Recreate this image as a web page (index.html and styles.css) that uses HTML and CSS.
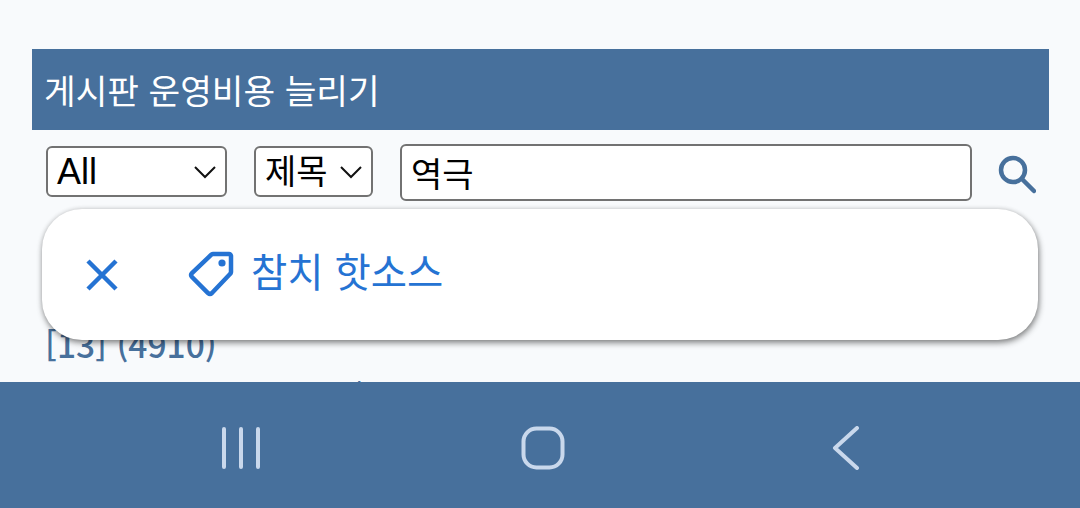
FILE: index.html
```html
<!DOCTYPE html>
<html lang="ko">
<head>
<meta charset="utf-8">
<title>게시판</title>
<link rel="stylesheet" href="styles.css">
</head>
<body>
<main class="page">
  <h1 class="board-title">게시판 운영비용 늘리기</h1>
  <form class="search-row">
    <div class="select select-all"><span>All</span><svg class="chev" width="24" height="14" viewBox="0 0 24 14"><path d="M3 2l10 10L23 2" /></svg></div>
    <div class="select select-field"><span>제목</span><svg class="chev" width="24" height="14" viewBox="0 0 24 14"><path d="M3 2l10 10L23 2" /></svg></div>
    <div class="search-input">역극</div>
    <svg class="search-icon" width="40" height="40" viewBox="0 0 40 40"><circle cx="17" cy="16" r="12" /><path d="M26.5 25.5L38 37" /></svg>
  </form>
  <div class="post-meta">[13] (4910)</div>
  <div class="post-title">역극 참치 핫소스 역극/</div>
  <div class="toast">
    <svg class="toast-close" width="36" height="36" viewBox="0 0 36 36"><path d="M4 4l28 28M32 4L4 32" /></svg>
    <svg class="toast-tag" width="46" height="46" viewBox="0 0 46 46"><path d="M25 3h16a2 2 0 0 1 2 2v16a3 3 0 0 1-1 2L24 42a3 3 0 0 1-4 0L4 26a3 3 0 0 1 0-4L23 4a3 3 0 0 1 2-1z" /><circle class="tag-hole" cx="34" cy="12" r="3.6" /></svg>
    <span class="toast-text">참치 핫소스</span>
  </div>
</main>
<nav class="navbar">
  <svg class="nav-recent" width="40" height="42" viewBox="0 0 40 42"><path d="M3 2v38M20 2v38M37 2v38" /></svg>
  <svg class="nav-home" width="44" height="44" viewBox="0 0 44 44"><rect x="2.5" y="2.5" width="39" height="39" rx="13" /></svg>
  <svg class="nav-back" width="30" height="44" viewBox="0 0 30 44"><path d="M27 2L5 22l22 20" /></svg>
</nav>
</body>
</html>
```
FILE: styles.css
```css
* { box-sizing: border-box; }
html, body { margin: 0; height: 508px; overflow: hidden; }
body {
  display: flex;
  flex-direction: column;
  background: #f8fafc;
  font-family: "Noto Sans CJK KR", "Noto Sans", sans-serif;
}
.page {
  position: relative;
  height: 382px;
  overflow: hidden;
  padding: 49px 31px 0 32px;
}
.board-title {
  margin: 0;
  height: 81px;
  padding-left: 12px;
  display: flex;
  align-items: center;
  background: #47709c;
  color: #fff;
  font-size: 34.4px;
  font-weight: 400;
  line-height: 1;
}
.search-row {
  display: flex;
  align-items: flex-start;
  height: 84px;
  padding: 14px 13px 0 14px;
}
.select {
  display: flex;
  align-items: center;
  justify-content: space-between;
  height: 51px;
  margin-top: 2px;
  background: #fff;
  border: 2px solid #727272;
  border-radius: 6px;
  color: #000;
  font-size: 36px;
  font-family: "Liberation Sans", "Noto Sans CJK KR", sans-serif;
}
.select-all { width: 181px; padding: 0 9px; }
.select-field { width: 119px; margin-left: 27px; padding: 0 9px; font-size: 34px; }
.select span { line-height: 1; }
.chev { fill: none; stroke: #111; stroke-width: 2; flex: none; }
.search-input {
  flex: 1;
  height: 57px;
  margin-left: 27px;
  padding-left: 9px;
  display: flex;
  align-items: center;
  background: #fff;
  border: 2px solid #727272;
  border-radius: 6px;
  color: #000;
  font-size: 34px;
  line-height: 1;
}
.search-icon { flex: none; margin: 10px 0 0 24px; fill: none; stroke: #47709c; stroke-width: 4.5; stroke-linecap: round; }
.post-meta {
  padding: 110px 0 0 13px;
  color: #47709c;
  font-size: 33.5px;
  font-weight: 500;
  line-height: 40px;
}
.post-title {
  padding: 12px 0 0 15px;
  color: #47709c;
  font-size: 33px;
  line-height: 40px;
}
.toast {
  position: absolute;
  left: 42px;
  top: 209px;
  width: 996px;
  height: 131px;
  padding-left: 42px;
  display: flex;
  align-items: center;
  background: #fff;
  border-radius: 40px;
  box-shadow: 1px 3px 6px rgba(0, 0, 0, 0.45), 0 0 5px rgba(0, 0, 0, 0.12);
  color: #2573d3;
}
.toast-close { flex: none; fill: none; stroke: #2573d3; stroke-width: 4.5; }
.toast-tag { flex: none; margin-left: 68px; margin-bottom: 2px; fill: none; stroke: #2573d3; stroke-width: 4.5; }
.tag-hole { fill: #2573d3; stroke: none; }
.toast-text { margin: 0 0 10px 17px; font-size: 39.4px; line-height: 1; }
.navbar {
  height: 126px;
  flex: none;
  display: grid;
  grid-template-columns: 1fr 1fr 1fr;
  align-items: center;
  justify-items: center;
  background: #47709c;
  padding: 5px 84px 0 90px;
}
.navbar svg { fill: none; stroke: #c9d8ec; stroke-width: 4; stroke-linecap: round; stroke-linejoin: round; }
```
